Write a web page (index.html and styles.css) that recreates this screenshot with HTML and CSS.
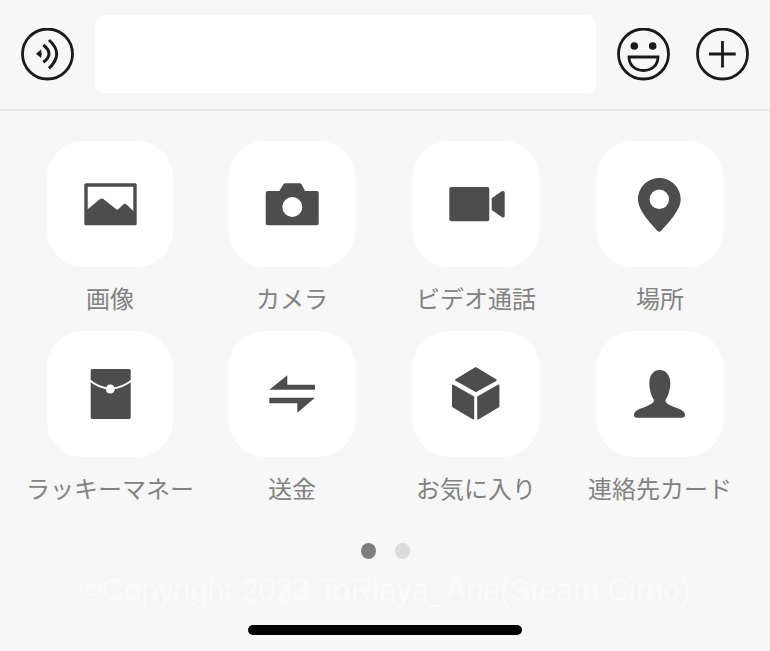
FILE: index.html
```html
<!DOCTYPE html>
<html lang="ja">
<head>
<meta charset="utf-8">
<title>メニュー</title>
<link rel="stylesheet" href="styles.css">
</head>
<body>
<div class="screen">
  <header class="topbar">
    <svg class="round-icon" viewBox="0 0 53 53">
      <circle class="line" cx="26.5" cy="26" r="25"/>
      <path class="solid-black" d="M15 25.8 20 21.5Q21.4 25.8 20 30Z"/>
      <path class="line thick" d="M22.3 17Q33.7 25.7 22.3 34.3"/>
      <path class="line thick" d="M28 12Q43.4 26 28 40.3"/>
    </svg>
    <div class="input"></div>
    <div class="actions">
      <svg class="round-icon" viewBox="0 0 53 53">
        <circle class="line" cx="26.5" cy="26" r="25"/>
        <circle class="solid-black" cx="17.3" cy="18" r="3.8"/>
        <circle class="solid-black" cx="35.7" cy="18" r="3.8"/>
        <path class="line" d="M12 29H41C41 37 35 42.5 26.5 42.5 18 42.5 12 37 12 29Z"/>
      </svg>
      <svg class="round-icon" viewBox="0 0 53 53">
        <circle class="line" cx="26.5" cy="26" r="25"/>
        <path class="line" d="M13 26H39.7M26.5 13V39.5"/>
      </svg>
    </div>
  </header>

  <main class="grid">
    <div class="cell">
      <div class="tile"><svg viewBox="0 0 126 126">
        <rect class="solid" x="37.3" y="42.3" width="52.4" height="42" rx="1.5"/>
        <path class="cut" d="M40.7 45.7H86.3V70L79.5 63.5Q78 62 76.5 63.3L71.5 68Q70.3 69 69 68L56 57.8Q54.7 57 53.4 57.8L40.7 68.3Z"/>
      </svg></div>
      <div class="label">画像</div>
    </div>
    <div class="cell">
      <div class="tile"><svg viewBox="0 0 126 126">
        <path class="solid" d="M38.7 50H50.3L54.3 43.5Q55 42.3 56.5 42.3H70.5Q72 42.3 72.7 43.5L76 50H87.7Q89.7 50 89.7 52V82.3Q89.7 84.3 87.7 84.3H38.7Q36.7 84.3 36.7 82.3V52Q36.7 50 38.7 50Z"/>
        <circle class="cut" cx="63.3" cy="66" r="10"/>
      </svg></div>
      <div class="label">カメラ</div>
    </div>
    <div class="cell">
      <div class="tile"><svg viewBox="0 0 126 126">
        <rect class="solid" x="36.3" y="46" width="40" height="34.3" rx="2"/>
        <path class="solid" d="M78.7 57.3 88.7 50.3Q91.7 49 91.7 52V74.5Q91.7 77.5 88.7 76L78.7 69Z"/>
      </svg></div>
      <div class="label">ビデオ通話</div>
    </div>
    <div class="cell">
      <div class="tile"><svg viewBox="0 0 126 126">
        <path class="solid" d="M62.3 37C50.5 37 41 46.5 41 58.3 41 70 55 84 60.5 90Q62.3 91.5 64 90C69.5 84 83.7 70 83.7 58.3 83.7 46.5 74 37 62.3 37Z"/>
        <circle class="cut" cx="62.3" cy="58.3" r="9.7"/>
      </svg></div>
      <div class="label">場所</div>
    </div>
    <div class="cell">
      <div class="tile"><svg viewBox="0 0 126 126">
        <rect class="solid" x="43.7" y="38" width="40" height="50" rx="1.5"/>
        <path class="cut-line" d="M43 49.5Q51 56.5 63.5 58 76 56.5 84.5 49.5"/>
        <circle class="cut" cx="63.3" cy="58" r="4.5"/>
      </svg></div>
      <div class="label">ラッキーマネー</div>
    </div>
    <div class="cell">
      <div class="tile"><svg viewBox="0 0 126 126">
        <path class="solid" d="M40.3 58.7 58.3 44.3V53.7H86V58.7Z"/>
        <path class="solid" d="M86 66.7 68.3 81.7V72.3H40.3V66.7Z"/>
      </svg></div>
      <div class="label">送金</div>
    </div>
    <div class="cell">
      <div class="tile"><svg viewBox="0 0 126 126">
        <path class="solid rounded" d="M62.7 37.2 43 49 62.7 60 82.7 49Z"/>
        <path class="solid rounded" d="M40 54.5 60.2 66V87.5L40 75.5Z"/>
        <path class="solid rounded" d="M85.4 54.5 65.2 66V87.5L85.4 75.5Z"/>
      </svg></div>
      <div class="label">お気に入り</div>
    </div>
    <div class="cell">
      <div class="tile"><svg viewBox="0 0 126 126">
        <path class="solid" d="M62.7 39C56 39 52.3 45 52.3 52 52.3 60 55 66 57 69 57 72 54 73 48 76 42 78 37 80 37 84Q37 86.7 40 86.7H85Q88 86.7 88 84C88 80 83 78 77 76 71 73.5 68.5 72 68.5 69 70.5 66 73.3 60 73.3 52 73.3 45 69.5 39 62.7 39Z"/>
      </svg></div>
      <div class="label">連絡先カード</div>
    </div>
  </main>

  <div class="pager">
    <span class="dot active"></span>
    <span class="dot"></span>
  </div>

  <div class="watermark">©Copyright,2023,ToRiaya_Aria(Steam Cirno)</div>

  <div class="home-bar"></div>
</div>
</body>
</html>
```

FILE: styles.css
```css
* {
  box-sizing: border-box;
}

html,
body {
  margin: 0;
  padding: 0;
}

body {
  background: #f7f7f7;
  font-family: "Noto Sans CJK JP", "Liberation Sans", sans-serif;
}

.screen {
  width: 770px;
  height: 651px;
  overflow: hidden;
  display: flex;
  flex-direction: column;
}

.topbar {
  display: flex;
  align-items: center;
  gap: 21px;
  height: 111px;
  padding: 15px 21px 16px;
  border-bottom: 2px solid #e8e8e8;
}

.round-icon {
  display: block;
  width: 53px;
  height: 53px;
  flex: none;
}

.input {
  width: 501px;
  height: 78px;
  background: #fff;
  border-radius: 9px;
}

.actions {
  display: flex;
  gap: 26px;
}

.line {
  fill: none;
  stroke: #1a1a1a;
  stroke-width: 2.8;
}

.thick {
  stroke-width: 3;
}

.solid-black {
  fill: #1a1a1a;
}

.grid {
  display: grid;
  grid-template-columns: 180px 184px 184px 184px;
  grid-auto-rows: 190px;
  padding: 30px 0 0 20px;
}

.cell {
  display: flex;
  flex-direction: column;
  align-items: center;
}

.tile {
  width: 126px;
  height: 126px;
  flex: none;
  background: #fff;
  border-radius: 36px;
}

.tile svg {
  display: block;
  width: 126px;
  height: 126px;
}

.solid {
  fill: #4d4d4d;
}

.rounded {
  stroke: #4d4d4d;
  stroke-width: 2;
  stroke-linejoin: round;
}

.cut {
  fill: #fff;
}

.cut-line {
  fill: none;
  stroke: #fff;
  stroke-width: 2;
}

.label {
  height: 64px;
  line-height: 62px;
  font-size: 24px;
  color: #828282;
  white-space: nowrap;
}

.pager {
  display: flex;
  justify-content: center;
  gap: 19px;
  margin-top: 22px;
}

.dot {
  width: 15px;
  height: 16px;
  border-radius: 50%;
  background: #dcdcdc;
}

.dot.active {
  background: #7e7e7e;
}

.watermark {
  margin-top: 16px;
  height: 30px;
  line-height: 30px;
  font-family: "Liberation Sans", sans-serif;
  font-size: 30.6px;
  color: #fbfbfb;
  text-align: center;
  white-space: nowrap;
}

.home-bar {
  align-self: center;
  width: 274px;
  height: 10px;
  margin-top: 20px;
  background: #000;
  border-radius: 5px;
}
```
